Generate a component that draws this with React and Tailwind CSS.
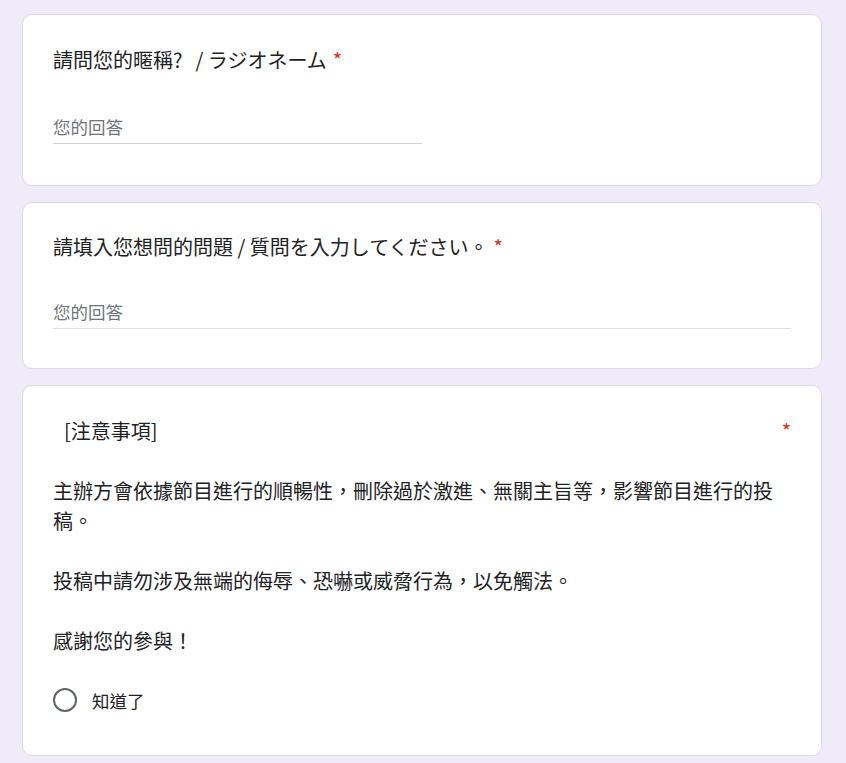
export default function App() {
  const font = { fontFamily: '"Noto Sans CJK TC", "Noto Sans CJK JP", "Noto Sans", sans-serif' };
  return (
    <div className="min-h-[763px] bg-[#f0ebf8] pt-[14px] pb-[7px]" style={font}>
      <div className="ml-[22px] flex w-[800px] flex-col gap-[16px]">
        <div className="rounded-[10px] border border-[#dadce0] bg-white px-[30px] pt-[30px] pb-[41px]">
          <div className="text-[20px] leading-[30px] text-[#202124]">
            請問您的暱稱?<span className="ml-[13px]">/ ラジオネーム</span><span className="pl-[6px] text-[#d93025]">*</span>
          </div>
          <div className="mt-[39px] w-1/2 border-b border-[#d3d3d3] pb-[4px] text-[17.5px] leading-[25px] text-[#70757a]">
            您的回答
          </div>
        </div>

        <div className="rounded-[10px] border border-[#dadce0] bg-white px-[30px] pt-[29px] pb-[39px]">
          <div className="text-[20px] leading-[30px] text-[#202124]">
            請填入您想問的問題 / 質問を入力してください。<span className="pl-[5px] text-[#d93025]">*</span>
          </div>
          <div className="mt-[37px] w-full border-b border-[#e0e0e0] pb-[4px] text-[17.5px] leading-[25px] text-[#70757a]">
            您的回答
          </div>
        </div>

        <div className="rounded-[10px] border border-[#dadce0] bg-white px-[30px] pt-[30px] pb-[31px]">
          <div className="text-[20px] leading-[30px] text-[#202124]">
            <div className="flex justify-between">
              <span className="pl-[11px]">[注意事項]</span>
              <span className="text-[#d93025]">*</span>
            </div>
            <div className="h-[30px]" />
            <p>主辦方會依據節目進行的順暢性，刪除過於激進、無關主旨等，影響節目進行的投稿。</p>
            <div className="h-[30px]" />
            <p>投稿中請勿涉及無端的侮辱、恐嚇或威脅行為，以免觸法。</p>
            <div className="h-[30px]" />
            <p>感謝您的參與！</p>
          </div>
          <div className="mt-[20px] flex h-[48px] items-center">
            <div className="h-[24px] w-[24px] rounded-full border-[2.5px] border-[#5f6368]" />
            <span className="ml-[15px] text-[17.5px] leading-[25px] text-[#202124]">知道了</span>
          </div>
        </div>
      </div>
    </div>
  );
}
